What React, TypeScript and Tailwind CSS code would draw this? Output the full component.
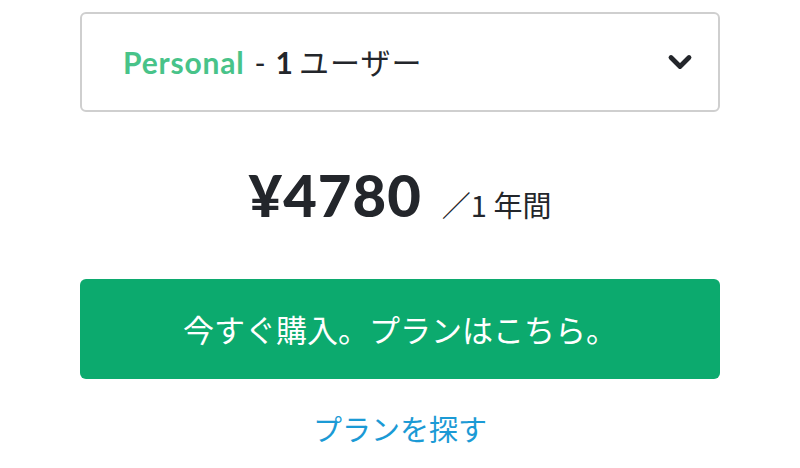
import { ChevronDown } from "lucide-react";

const latin = "font-['Lato','Noto_Sans_CJK_JP',sans-serif]";
const jp = "font-['Noto_Sans_CJK_JP','Noto_Sans',sans-serif]";

export default function App() {
  return (
    <div className="w-[800px] h-[468px] bg-white overflow-hidden">
      <div className="w-[640px] mx-auto pt-3">
        {/* plan select */}
        <button className="w-full h-[100px] flex items-center justify-between pl-[41px] pr-[20px] border-2 border-[#cfcfcf] rounded-md bg-white">
          <span className="flex items-baseline text-[30px] text-[#23262b]">
            <span className={`${latin} font-bold text-[#48c389] tracking-[0.8px]`}>Personal</span>
            <span className={`${latin} ml-[10px]`}>-</span>
            <span className={`${latin} font-bold ml-[10px]`}>1</span>
            <span className={`${jp} ml-[6px] tracking-[1px]`}>ユーザー</span>
          </span>
          <ChevronDown className="w-9 h-9 text-[#23262b]" strokeWidth={3.2} />
        </button>

        {/* price */}
        <div className="h-[167px] flex items-center justify-center pt-[2px]">
          <div className="flex items-baseline text-[#23262b]">
            <span className={`${latin} font-black text-[58px] leading-none tracking-[1px]`}>¥4780</span>
            <span className={`${jp} text-[29px] ml-5`}>／1 年間</span>
          </div>
        </div>

        {/* buy button */}
        <button
          className={`${jp} w-full h-[100px] rounded-md bg-[#0caa6e] text-white text-[31px] flex items-center justify-center`}
        >
          今すぐ購入。プランはこちら。
        </button>

        {/* link */}
        <div className="h-[100px] flex items-center justify-center">
          <a href="#" className={`${jp} text-[29px] text-[#1b9ad5]`}>
            プランを探す
          </a>
        </div>
      </div>
    </div>
  );
}
